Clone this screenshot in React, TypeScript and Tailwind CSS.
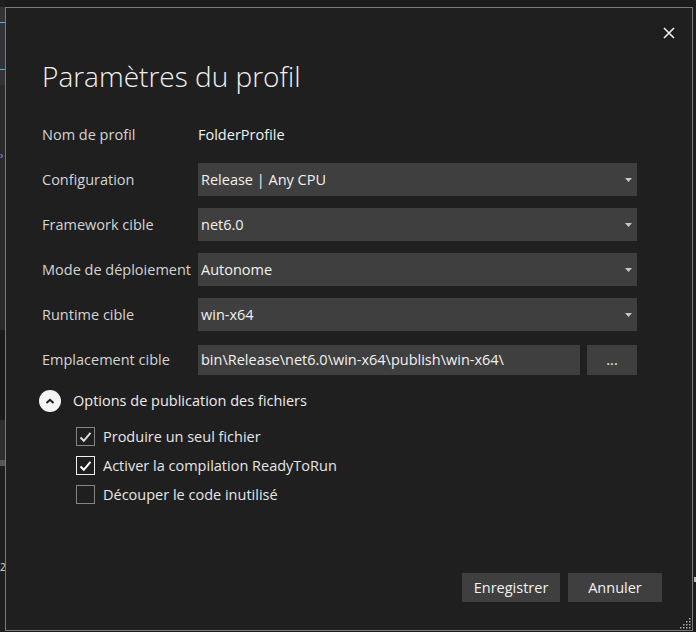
import type { ReactNode } from "react";

type TRow = {
  label: string;
  value: string;
};

const selectRows: TRow[] = [
  { label: "Configuration", value: "Release | Any CPU" },
  { label: "Framework cible", value: "net6.0" },
  { label: "Mode de déploiement", value: "Autonome" },
  { label: "Runtime cible", value: "win-x64" },
];

const checks = [
  { label: "Produire un seul fichier", checked: true, focused: false },
  { label: "Activer la compilation ReadyToRun", checked: true, focused: true },
  { label: "Découper le code inutilisé", checked: false, focused: false },
];

function Row({ label, children }: { label: string; children: ReactNode }) {
  return (
    <div className="grid h-[33px] grid-cols-[156px_1fr] items-center">
      <div className="text-[#d4d4d4]">{label}</div>
      {children}
    </div>
  );
}

function Select({ value }: { value: string }) {
  return (
    <div className="flex h-[33px] items-center justify-between bg-[#3f3f3f] pl-[3px] pr-[5px] text-[#f1f1f1]">
      <span>{value}</span>
      <svg width="7" height="4" viewBox="0 0 7 4">
        <polygon points="0,0 7,0 3.5,4" fill="#c8c8c8" />
      </svg>
    </div>
  );
}

function CheckBox({ checked, focused }: { checked: boolean; focused: boolean }) {
  return (
    <div
      className={`flex h-[19px] w-[19px] items-center justify-center border ${
        focused ? "border-[#f0f0f0]" : "border-[#858585]"
      }`}
    >
      {checked && (
        <svg width="13" height="12" viewBox="0 0 13 12">
          <path
            d="M1.5 6.5 L4.8 9.8 L11.5 1.8"
            fill="none"
            stroke={focused ? "#ffffff" : "#dcdcdc"}
            strokeWidth="2"
          />
        </svg>
      )}
    </div>
  );
}

export default function App() {
  return (
    <div
      className="flex h-[632px] w-[696px] overflow-hidden bg-[#1b1b1b] text-[14.5px]"
      style={{ fontFamily: '"Open Sans", "Noto Sans", sans-serif' }}
    >
      {/* fenêtre derrière, bord gauche */}
      <div className="flex w-[5px] shrink-0 flex-col overflow-hidden">
        <div className="h-[7px] bg-[#1e1e1e]" />
        <div className="flex h-[78px] flex-col bg-[#333337]">
          <div className="mt-[15px] h-px bg-[#4fb3d9]" />
          <div className="mt-[46px] h-px bg-[#4fb3d9]" />
        </div>
        <div className="h-[245px] bg-[#2a2a2c] pt-[64px] text-[11px] leading-none text-[#7aa8d8]">›</div>
        <div className="h-[90px] bg-[#1a1a1a]" />
        <div className="h-[40px] bg-[#2e2e2e]" />
        <div className="h-[6px] bg-[#555]" />
        <div className="flex-1 bg-[#1e1e1e] pt-[96px] text-[10px] leading-none text-[#ddd]">2</div>
      </div>

      {/* boîte de dialogue */}
      <div className="relative mt-[7px] flex h-[624px] w-[688px] shrink-0 flex-col border border-[#7a7a7a] bg-[#1f1f1f]">
        <div className="flex justify-end pr-[17px] pt-[19px]">
          <svg width="12" height="12" viewBox="0 0 12 12">
            <path d="M1 1 L11 11 M11 1 L1 11" stroke="#f0f0f0" strokeWidth="1.6" />
          </svg>
        </div>

        <div className="pl-[36px] pr-[55px]">
          <div className="mt-[17px] text-[28px] font-light leading-[40px] text-[#f1f1f1]">
            Paramètres du profil
          </div>

          <div className="mt-[22px] flex flex-col gap-[12px]">
            <Row label="Nom de profil">
              <div className="text-[#f1f1f1]">FolderProfile</div>
            </Row>
            {selectRows.map((r) => (
              <Row key={r.label} label={r.label}>
                <Select value={r.value} />
              </Row>
            ))}
            <Row label="Emplacement cible">
              <div className="flex h-[30px] gap-[7px]">
                <div className="flex flex-1 items-center bg-[#3f3f3f] pl-[3px] text-[#f1f1f1]">
                  bin\Release\net6.0\win-x64\publish\win-x64\
                </div>
                <div className="flex w-[50px] items-center justify-center bg-[#3f3f3f] text-[#f1f1f1]">
                  ...
                </div>
              </div>
            </Row>
          </div>

          <div className="ml-[-3px] mt-[12px] flex h-[26px] items-center gap-[12px]">
            <div className="flex h-[22px] w-[22px] items-center justify-center rounded-full bg-[#f5f5f5]">
              <svg width="10" height="7" viewBox="0 0 10 7">
                <path d="M1.5 5 L5 1.8 L8.5 5" fill="none" stroke="#1f1f1f" strokeWidth="2" />
              </svg>
            </div>
            <span className="text-[#ececec]">Options de publication des fichiers</span>
          </div>

          <div className="ml-[34px] mt-[8px] flex flex-col">
            {checks.map((c) => (
              <div key={c.label} className="flex h-[29px] items-center gap-[8px]">
                <CheckBox checked={c.checked} focused={c.focused} />
                <span className="text-[#e6e6e6]">{c.label}</span>
              </div>
            ))}
          </div>
        </div>

        <div className="mt-auto flex justify-end gap-[8px] pb-[28px] pr-[30px]">
          <div className="flex h-[29px] w-[98px] items-center justify-center bg-[#3f3f3f] text-[#f1f1f1]">
            Enregistrer
          </div>
          <div className="flex h-[29px] w-[94px] items-center justify-center bg-[#3f3f3f] text-[#f1f1f1]">
            Annuler
          </div>
        </div>

        {/* poignée de redimensionnement */}
        <svg className="absolute bottom-[1px] right-[1px]" width="12" height="12" viewBox="0 0 12 12">
          {[
            [10, 2],
            [10, 5],
            [7, 5],
            [10, 8],
            [7, 8],
            [4, 8],
            [10, 11],
            [7, 11],
            [4, 11],
            [1, 11],
          ].map(([x, y], i) => (
            <rect key={i} x={x} y={y - 1} width="1.5" height="1.5" fill="#a8a8a8" />
          ))}
        </svg>
      </div>

      {/* bord droit */}
      <div className="flex min-w-0 flex-1 flex-col bg-[#1e1e1e] pt-[577px]">
        <div className="ml-[1px] h-[5px] w-[2px] bg-[#bdbdbd]" />
      </div>
    </div>
  );
}
